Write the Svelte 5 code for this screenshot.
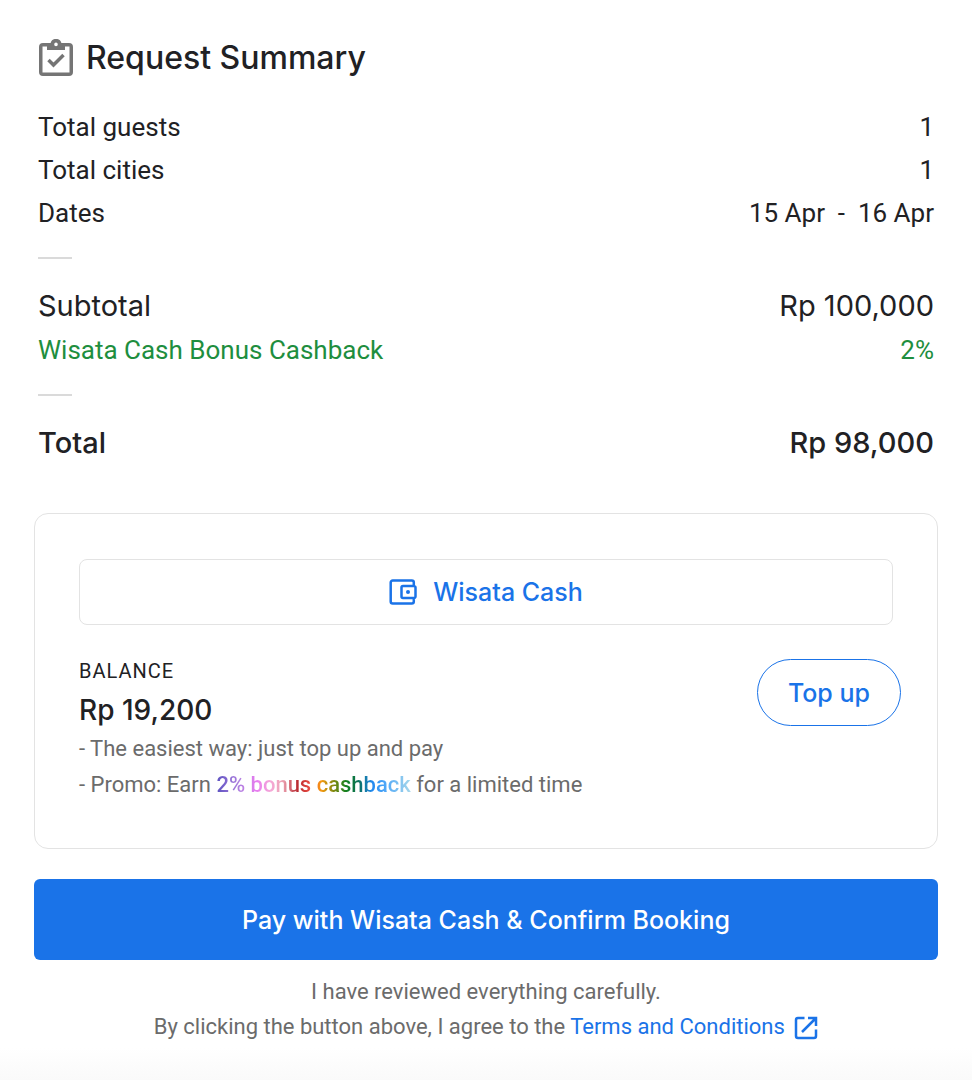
<script>
    const details = [
        { label: "Total guests", value: "1" },
        { label: "Total cities", value: "1" },
        { label: "Dates", value: "15 Apr\u00a0 -\u00a0 16 Apr" },
    ];

    const perks = { before: "- Promo: Earn ", bonus: "2% bonus cashback", after: " for a limited time" };
</script>

<main class="page">
    <section class="summary">
        <header class="title">
            <svg class="title-icon" viewBox="0 0 36 38" aria-hidden="true">
                <path
                    fill="#757575"
                    fill-rule="evenodd"
                    d="M5 4h7.6a5.6 5.6 0 0 1 10.8 0H31a4 4 0 0 1 4 4v25a4 4 0 0 1-4 4H5a4 4 0 0 1-4-4V8a4 4 0 0 1 4-4zM4.5 7.5v26h27v-26H27V11H9V7.5zM18 3.6a1.8 1.8 0 1 0 0 3.6a1.8 1.8 0 1 0 0-3.6z"
                />
                <path fill="none" stroke="#757575" stroke-width="3.5" d="M10.5 21l5 5 10-10" />
            </svg>
            <h1>Request Summary</h1>
        </header>

        <dl>
            {#each details as item}
                <div class="row">
                    <dt>{item.label}</dt>
                    <dd>{item.value}</dd>
                </div>
            {/each}
        </dl>
        <hr />
        <dl>
            <div class="row price">
                <dt>Subtotal</dt>
                <dd>Rp 100,000</dd>
            </div>
            <div class="row cashback">
                <dt>Wisata Cash Bonus Cashback</dt>
                <dd>2%</dd>
            </div>
        </dl>
        <hr />
        <dl>
            <div class="row price total">
                <dt>Total</dt>
                <dd>Rp 98,000</dd>
            </div>
        </dl>
    </section>

    <section class="card">
        <button class="method">
            <svg class="wallet" viewBox="0 0 28 28" fill="none" stroke="currentColor" aria-hidden="true">
                <path
                    stroke-width="2.5"
                    stroke-linejoin="round"
                    d="M24.8 8V4.5a2 2 0 0 0-2-2H3.7a2 2 0 0 0-2 2v19a2 2 0 0 0 2 2h19.1a2 2 0 0 0 2-2V20M14 8H25a1.5 1.5 0 0 1 1.5 1.5v9A1.5 1.5 0 0 1 25 20H14a1.5 1.5 0 0 1-1.5-1.5v-9A1.5 1.5 0 0 1 14 8z"
                />
                <circle cx="19" cy="14" r="2" fill="currentColor" stroke="none" />
            </svg>
            <span>Wisata Cash</span>
        </button>

        <div class="wallet-info">
            <div>
                <div class="caption">BALANCE</div>
                <div class="amount">Rp 19,200</div>
                <p>- The easiest way: just top up and pay</p>
                <p>{perks.before}<span class="rainbow">{perks.bonus}</span>{perks.after}</p>
            </div>
            <button class="top-up">Top up</button>
        </div>
    </section>

    <button class="pay">Pay with Wisata Cash &amp; Confirm Booking</button>

    <footer>
        <p>I have reviewed everything carefully.</p>
        <p>
            By clicking the button above, I agree to the
            <a href="#terms">Terms and Conditions
                <svg class="external" viewBox="0 0 24 24" fill="none" stroke="currentColor" stroke-width="2.5" aria-hidden="true">
                    <path d="M10.5 2H4a2 2 0 0 0-2 2v16a2 2 0 0 0 2 2h16a2 2 0 0 0 2-2v-6.5M14 2h8v8M22 2L8 16" />
                </svg></a>
        </p>
    </footer>
</main>

<style>
    :global(body) {
        margin: 0;
        background: #fff;
    }

    .page {
        --display: Inter, "Liberation Sans", sans-serif;
        --blue: #1a73e8;
        --line: #e3e3e3;
        padding: 36px 34px;
        font-family: Roboto, "Liberation Sans", sans-serif;
        font-size: 26px;
        color: #212124;
        background: linear-gradient(to top, #fafafa, #fff 32px);
    }

    h1,
    p,
    dl,
    dd {
        margin: 0;
    }

    button {
        font: 500 25px var(--display);
        cursor: pointer;
    }

    .summary {
        padding: 0 4px;
    }

    .title {
        display: flex;
        align-items: center;
        gap: 12px;
        margin-bottom: 26px;
    }

    .title-icon {
        width: 36px;
        height: 38px;
    }

    h1 {
        font: 500 32px/44px var(--display);
    }

    .row {
        display: flex;
        justify-content: space-between;
        line-height: 43px;
    }

    .price {
        font-family: var(--display);
        font-size: 29px;
        line-height: 44px;
    }

    .cashback {
        color: #1e8e3e;
        line-height: 44px;
    }

    .total {
        font-weight: 500;
    }

    hr {
        width: 34px;
        height: 2px;
        margin: 22px 0 25px;
        border: 0;
        background: #dadada;
    }

    .card {
        margin-top: 48px;
        padding: 45px 44px;
        border: 1px solid var(--line);
        border-radius: 14px;
    }

    .method {
        display: flex;
        align-items: center;
        justify-content: center;
        gap: 16px;
        width: 100%;
        height: 66px;
        border: 1px solid var(--line);
        border-radius: 8px;
        background: #fff;
        color: var(--blue);
    }

    .wallet {
        width: 28px;
        height: 28px;
    }

    .wallet-info {
        display: flex;
        align-items: flex-start;
        justify-content: space-between;
        margin: 34px -8px 0 0;
    }

    .caption {
        margin-bottom: 6px;
        font-size: 20px;
        line-height: 24px;
        letter-spacing: 1px;
    }

    .amount {
        font: 500 28px/42px var(--display);
    }

    .card p {
        font-size: 22px;
        line-height: 36px;
        color: #6b6b6b;
    }

    .rainbow {
        font-weight: 500;
        color: transparent;
        background: linear-gradient(
            90deg,
            #5a52c0,
            #b07fe0 12%,
            #e87cf0 21%,
            #f5a8d8 28%,
            #eda5b5 34%,
            #b82a30 42%,
            #e84a40 48%,
            #f79a10 54%,
            #868a10 60%,
            #108020 67%,
            #0a7058 73%,
            #2088f0 80%,
            #50a8f8 87%,
            #a8d8ea
        );
        background-clip: text;
    }

    .top-up {
        flex: none;
        height: 67px;
        padding: 0 30px;
        border: 1px solid var(--blue);
        border-radius: 34px;
        background: #fff;
        color: var(--blue);
    }

    .pay {
        width: 100%;
        height: 81px;
        margin-top: 30px;
        border: 0;
        border-radius: 6px;
        background: var(--blue);
        color: #fff;
    }

    footer {
        margin-top: 14px;
        font-size: 22px;
        line-height: 35px;
        text-align: center;
        color: #6b6b6b;
    }

    a {
        color: var(--blue);
        text-decoration: none;
    }

    .external {
        width: 24px;
        height: 24px;
        margin-left: 4px;
        vertical-align: middle;
    }
</style>
